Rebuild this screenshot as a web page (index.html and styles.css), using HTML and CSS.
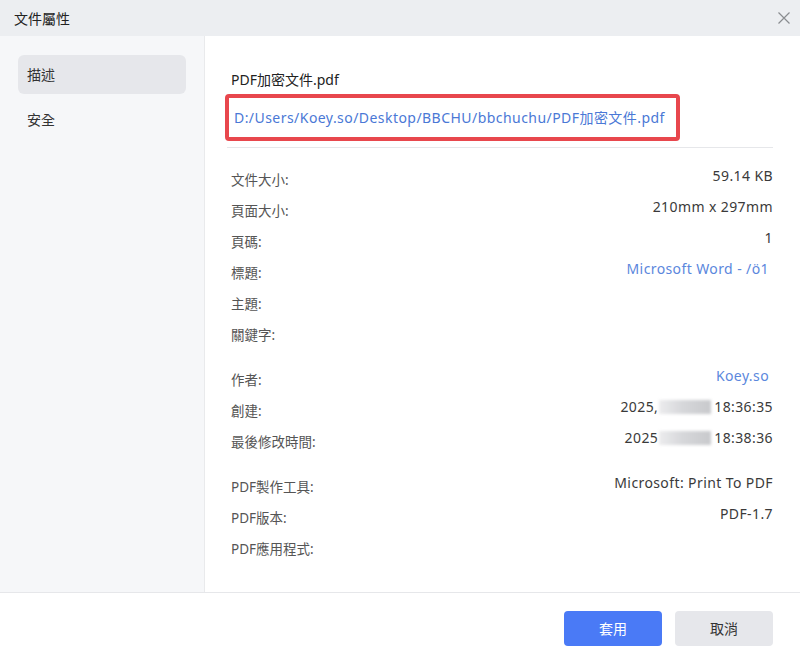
FILE: index.html
```html
<!DOCTYPE html>
<html lang="zh-Hant">

<head>
    <meta charset="UTF-8">
    <meta name="viewport" content="width=device-width, initial-scale=1.0">
    <title>文件屬性</title>
    <link rel="stylesheet" href="styles.css">
</head>

<body>

    <div class="dialog">
        <div class="header">
            <span class="title">文件屬性</span>
            <svg class="close" width="14" height="14" viewBox="0 0 14 14">
                <path d="M1.5 1.5 L12.5 12.5 M12.5 1.5 L1.5 12.5" stroke="#8a8c90" stroke-width="1.2" fill="none" />
            </svg>
        </div>

        <div class="body">
            <ul class="side">
                <li class="tab active">描述</li>
                <li class="tab">安全</li>
            </ul>

            <div class="main">
                <div class="file-name">PDF加密文件.pdf</div>
                <div class="file-path">D:/Users/Koey.so/Desktop/BBCHU/bbchuchu/PDF加密文件.pdf</div>
                <div class="line"></div>

                <ul class="group">
                    <li class="row"><span class="label">文件大小:</span><span class="value">59.14 KB</span></li>
                    <li class="row"><span class="label">頁面大小:</span><span class="value">210mm x 297mm</span></li>
                    <li class="row"><span class="label">頁碼:</span><span class="value">1</span></li>
                    <li class="row"><span class="label">標題:</span><span class="value link">Microsoft Word - /ö1</span></li>
                    <li class="row"><span class="label">主題:</span><span class="value"></span></li>
                    <li class="row"><span class="label">關鍵字:</span><span class="value"></span></li>
                </ul>

                <ul class="group">
                    <li class="row"><span class="label">作者:</span><span class="value link">Koey.so</span></li>
                    <li class="row"><span class="label">創建:</span><span class="value">2025,<i class="blur"></i>18:36:35</span></li>
                    <li class="row"><span class="label">最後修改時間:</span><span class="value">2025<i class="blur"></i>18:38:36</span></li>
                </ul>

                <ul class="group">
                    <li class="row"><span class="label">PDF製作工具:</span><span class="value">Microsoft: Print To PDF</span></li>
                    <li class="row"><span class="label">PDF版本:</span><span class="value">PDF-1.7</span></li>
                    <li class="row"><span class="label">PDF應用程式:</span><span class="value"></span></li>
                </ul>
            </div>
        </div>

        <div class="footer">
            <div class="btn btn-primary">套用</div>
            <div class="btn btn-cancel">取消</div>
        </div>
    </div>

</body>

</html>
```

FILE: styles.css
```css
* {
    padding: 0;
    margin: 0;
    list-style: none;
    box-sizing: border-box;
}

body {
    width: 800px;
    height: 664px;
    background-color: #fff;
    font-family: "Noto Sans", "Noto Sans CJK TC", sans-serif;
    color: #333;
}

.dialog {
    width: 800px;
    height: 664px;
    display: flex;
    flex-direction: column;
}

.header {
    height: 36px;
    flex-shrink: 0;
    display: flex;
    justify-content: space-between;
    align-items: center;
    padding: 0 9px 0 14px;
    background-color: #eceef1;
}

.title {
    font-size: 14px;
    color: #222;
}

.body {
    height: 556px;
    display: flex;
}

/* 左侧标签 */
.side {
    width: 205px;
    flex-shrink: 0;
    padding: 19px 18px 0 18px;
    background-color: #f6f7f9;
    border-right: 1px solid #e9eaec;
}

.tab {
    height: 39px;
    line-height: 39px;
    padding-left: 9px;
    margin-bottom: 6px;
    font-size: 14px;
    color: #333;
    border-radius: 6px;
    cursor: pointer;
}

.tab.active {
    background-color: #e6e7eb;
}

/* 右侧内容 */
.main {
    flex: 1;
    padding: 33px 27px 0 26px;
}

.file-name {
    font-size: 14px;
    line-height: 22px;
    color: #222;
}

.file-path {
    display: inline-block;
    width: 455px;
    margin: 3px 0 0 -6px;
    padding: 0 5px;
    height: 47px;
    line-height: 39px;
    font-size: 14px;
    letter-spacing: 0.45px;
    color: #4a78d6;
    border: 4px solid #e8474d;
    border-radius: 4px;
    white-space: nowrap;
}

.line {
    height: 1px;
    margin: 6px 0 0 -4px;
    background-color: #e6e7ea;
}

.group {
    margin-top: 15px;
}

.group + .group {
    margin-top: 14px;
}

.row {
    height: 31px;
    display: flex;
    justify-content: space-between;
    align-items: center;
}

.label {
    font-size: 13.5px;
    color: #555;
}

.value {
    font-size: 14px;
    letter-spacing: 0.4px;
    color: #3a3a3a;
    display: flex;
    align-items: center;
    position: relative;
    top: -3px;
}

.value.link {
    color: #5b87dd;
    padding-right: 4px;
}

.blur {
    display: inline-block;
    width: 52px;
    height: 14px;
    margin: 0 3px 0 1px;
    background: linear-gradient(90deg, #ececee, #d6d7da 45%, #c8c9cc);
    filter: blur(1.5px);
}

/* 底部按钮 */
.footer {
    flex: 1;
    display: flex;
    justify-content: flex-end;
    gap: 13px;
    padding: 18px 27px 0 0;
    border-top: 1px solid #e6e7ea;
}

.btn {
    width: 98px;
    height: 35px;
    line-height: 35px;
    text-align: center;
    font-size: 14px;
    border-radius: 4px;
    cursor: pointer;
}

.btn-primary {
    background-color: #4a7af6;
    color: #fff;
}

.btn-cancel {
    background-color: #e6e7eb;
    color: #333;
}
```
